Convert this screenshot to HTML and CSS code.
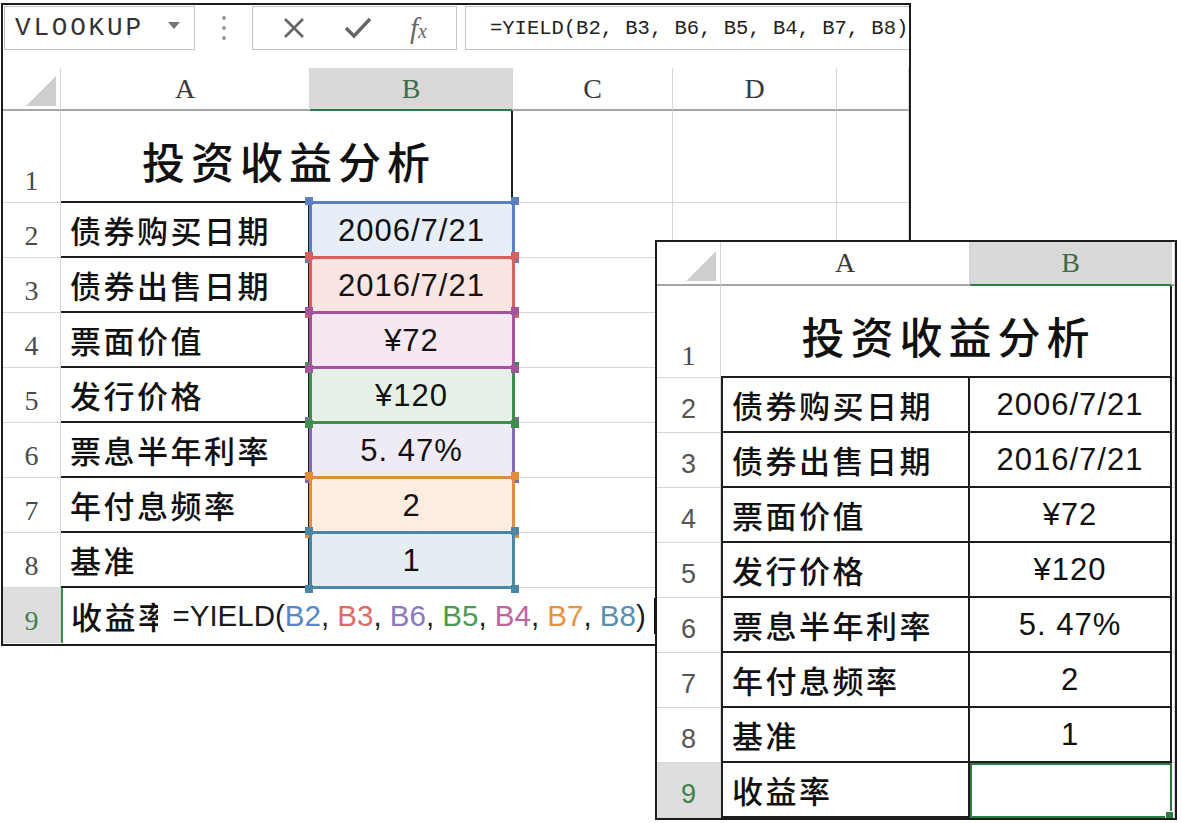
FILE: index.html
```html
<!DOCTYPE html>
<html lang="zh-CN">
<head>
  <meta charset="UTF-8" />
  <title>投资收益分析 - YIELD</title>
  <link rel="stylesheet" href="styles.css">
</head>
<body>
<div class="desk">

  <div class="win win-left">
    <div class="fbar">
      <div class="namebox">
        <span>VLOOKUP</span>
        <svg class="drop" width="12" height="8" viewBox="0 0 12 8"><polygon points="0,0 12,0 6,7" fill="#777"/></svg>
      </div>
      <div class="dots">
        <svg width="6" height="26" viewBox="0 0 6 26"><circle cx="3" cy="3" r="2" fill="#9a9a9a"/><circle cx="3" cy="13" r="2" fill="#9a9a9a"/><circle cx="3" cy="23" r="2" fill="#9a9a9a"/></svg>
      </div>
      <div class="fbtns">
        <svg width="24" height="24" viewBox="0 0 24 24"><path d="M3 3 L21 21 M21 3 L3 21" stroke="#666" stroke-width="2.6" fill="none"/></svg>
        <svg width="28" height="24" viewBox="0 0 28 24"><path d="M2 12 L10 20 L26 3" stroke="#666" stroke-width="3.4" fill="none"/></svg>
        <span class="fx">f<small>x</small></span>
      </div>
      <div class="finput">=YIELD(B2, B3, B6, B5, B4, B7, B8)</div>
    </div>

    <div class="grid grid-left">
      <div class="corner"><svg width="30" height="30" viewBox="0 0 30 30"><polygon points="30,0 30,30 0,30" fill="#cfcfcf"/></svg></div>
      <div class="colhead">A</div>
      <div class="colhead sel">B</div>
      <div class="colhead">C</div>
      <div class="colhead">D</div>
      <div class="colhead"></div>

      <div class="rowhead">1</div>
      <div class="title">投资收益分析</div>
      <div></div><div></div><div></div>

      <div class="rowhead">2</div>
      <div class="lab">债券购买日期</div>
      <div class="val ref b2">2006/7/21</div>
      <div></div><div></div><div></div>

      <div class="rowhead">3</div>
      <div class="lab">债券出售日期</div>
      <div class="val ref b3">2016/7/21</div>
      <div></div><div></div><div></div>

      <div class="rowhead">4</div>
      <div class="lab">票面价值</div>
      <div class="val ref b4">¥72</div>
      <div></div><div></div><div></div>

      <div class="rowhead">5</div>
      <div class="lab">发行价格</div>
      <div class="val ref b5">¥120</div>
      <div></div><div></div><div></div>

      <div class="rowhead">6</div>
      <div class="lab">票息半年利率</div>
      <div class="val ref b6">5. 47%</div>
      <div></div><div></div><div></div>

      <div class="rowhead">7</div>
      <div class="lab">年付息频率</div>
      <div class="val ref b7">2</div>
      <div></div><div></div><div></div>

      <div class="rowhead">8</div>
      <div class="lab">基准</div>
      <div class="val ref b8">1</div>
      <div></div><div></div><div></div>

      <div class="rowhead active">9</div>
      <div class="edit">
        <span class="under">收益率</span>
        <span class="fml">=YIELD(<span class="c2">B2</span>, <span class="c3">B3</span>, <span class="c6">B6</span>, <span class="c5">B5</span>, <span class="c4">B4</span>, <span class="c7">B7</span>, <span class="c8">B8</span>)</span>
        <span class="cursor"></span>
      </div>
    </div>
  </div>

  <div class="win win-right">
    <div class="grid grid-right">
      <div class="corner"><svg width="30" height="30" viewBox="0 0 30 30"><polygon points="30,0 30,30 0,30" fill="#cfcfcf"/></svg></div>
      <div class="colhead">A</div>
      <div class="colhead sel">B</div>
      <div class="colhead"></div>

      <div class="rowhead">1</div>
      <div class="title">投资收益分析</div>
      <div></div>

      <div class="rowhead sans">2</div>
      <div class="lab">债券购买日期</div>
      <div class="val">2006/7/21</div>
      <div></div>

      <div class="rowhead sans">3</div>
      <div class="lab">债券出售日期</div>
      <div class="val">2016/7/21</div>
      <div></div>

      <div class="rowhead sans">4</div>
      <div class="lab">票面价值</div>
      <div class="val">¥72</div>
      <div></div>

      <div class="rowhead sans">5</div>
      <div class="lab">发行价格</div>
      <div class="val">¥120</div>
      <div></div>

      <div class="rowhead sans">6</div>
      <div class="lab">票息半年利率</div>
      <div class="val">5. 47%</div>
      <div></div>

      <div class="rowhead sans">7</div>
      <div class="lab">年付息频率</div>
      <div class="val">2</div>
      <div></div>

      <div class="rowhead sans">8</div>
      <div class="lab">基准</div>
      <div class="val">1</div>
      <div></div>

      <div class="rowhead sans active">9</div>
      <div class="lab">收益率</div>
      <div class="val current"></div>
      <div></div>
    </div>
  </div>

</div>
</body>
</html>
```

FILE: styles.css
```css
* { box-sizing: border-box; }

body {
  margin: 0;
  background: #fff;
  color: #111;
  font-family: "Noto Sans CJK SC", "Noto Sans", sans-serif;
}

.desk {
  position: relative;
  width: 1181px;
  height: 823px;
  overflow: hidden;
}

.win {
  border: 2px solid #1c1c1c;
  background: #fff;
  overflow: hidden;
}

.win-left {
  width: 910px;
  height: 643px;
  margin: 3px 0 0 1px;
}

.win-right {
  position: absolute;
  left: 655px;
  top: 240px;
  width: 522px;
  height: 580px;
  z-index: 10;
}

/* formula bar */
.fbar {
  display: flex;
  align-items: stretch;
  height: 45px;
  margin-bottom: 18px;
  padding-top: 1px;
}

.namebox {
  width: 191px;
  margin-left: 1px;
  border: 1px solid #c4c4c4;
  display: flex;
  align-items: center;
  justify-content: space-between;
  padding: 0 14px 0 10px;
  font-family: "Liberation Mono", monospace;
  font-size: 26px;
  letter-spacing: 2.8px;
  color: #333;
}

.namebox .drop { margin-bottom: 4px; }

.dots {
  width: 57px;
  display: flex;
  align-items: center;
  justify-content: center;
}

.fbtns {
  width: 205px;
  border: 1px solid #c4c4c4;
  display: flex;
  align-items: center;
  justify-content: space-around;
  padding: 0 10px;
}

.fx {
  font-family: "Liberation Serif", serif;
  font-style: italic;
  font-size: 29px;
  color: #666;
}

.fx small { font-size: 20px; }

.finput {
  flex: 1;
  margin-left: 8px;
  border: 1px solid #c4c4c4;
  border-right: none;
  display: flex;
  align-items: center;
  padding-left: 24px;
  font-family: "Liberation Mono", monospace;
  font-size: 20.5px;
  white-space: nowrap;
  color: #222;
}

/* grids */
.grid { display: grid; }

.grid-left {
  grid-template-columns: 58px 249px 203px 160px 164px 1fr;
  grid-template-rows: 43px 92px repeat(8, 55px);
}

.grid-right {
  grid-template-columns: 64px 249px 202px 1fr;
  grid-template-rows: 44px 92px repeat(8, 55px);
}

.grid > div {
  display: flex;
  align-items: center;
  border-right: 1px solid #d6d6d6;
  border-bottom: 1px solid #d6d6d6;
}

.grid > .corner {
  align-items: flex-end;
  justify-content: flex-end;
  padding: 0 4px 3px 0;
  border-bottom: 2px solid #a6a6a6;
}

.grid > .colhead {
  justify-content: center;
  font-family: "Liberation Serif", serif;
  font-size: 28px;
  color: #3a3a3a;
  border-bottom: 2px solid #a6a6a6;
}

.grid > .colhead.sel {
  background: #d9d9d9;
  color: #3f6c48;
  border-bottom: 2px solid #2f7b45;
}

.grid > .rowhead {
  justify-content: center;
  align-items: flex-end;
  padding-bottom: 5px;
  font-family: "Liberation Serif", serif;
  font-size: 28px;
  color: #4a4a4a;
}

.grid > .rowhead.sans {
  font-family: "Liberation Sans", sans-serif;
  font-size: 27px;
  color: #555;
  padding-bottom: 7px;
}

.grid > .rowhead.active {
  background: #dedede;
  color: #3f7f50;
}

.grid > .title {
  grid-column: span 2;
  justify-content: center;
  padding: 8px 0 0 6px;
  font-size: 43px;
  font-weight: 500;
  letter-spacing: 6px;
  border-right: 2px solid #1e1e1e;
  border-bottom: 2px solid #1e1e1e;
}

.grid > .lab {
  padding-left: 9px;
  font-size: 31px;
  font-weight: 500;
  letter-spacing: 2.5px;
  border-right: 2px solid #1e1e1e;
  border-bottom: 2px solid #1e1e1e;
}

.grid-right > .lab { box-shadow: inset 2px 0 0 #1e1e1e; padding-left: 11px; }

.grid > .val {
  justify-content: center;
  font-family: "Liberation Sans", sans-serif;
  font-size: 31px;
  letter-spacing: 1px;
  border-right: 2px solid #1e1e1e;
  border-bottom: 2px solid #1e1e1e;
}

.grid > .val.current {
  position: relative;
  border: 2px solid #2f7b45;
}

.val.current::after {
  content: "";
  position: absolute;
  right: -4px;
  bottom: -4px;
  width: 7px;
  height: 7px;
  background: #2f7b45;
  border: 1px solid #fff;
}

/* coloured reference boxes */
.grid > .ref {
  position: relative;
  background: var(--fill);
  border: none;
}

.ref::before {
  content: "";
  position: absolute;
  top: -2px;
  left: -1px;
  right: -2px;
  bottom: -1px;
  border: 3px solid var(--c);
}

.ref::after {
  content: "";
  position: absolute;
  top: -6px;
  left: -5px;
  right: -6px;
  bottom: -5px;
  background:
    linear-gradient(var(--c), var(--c)) left top / 8px 8px no-repeat,
    linear-gradient(var(--c), var(--c)) right top / 8px 8px no-repeat,
    linear-gradient(var(--c), var(--c)) left bottom / 8px 8px no-repeat,
    linear-gradient(var(--c), var(--c)) right bottom / 8px 8px no-repeat;
}

.b2 { --c: #5b80c2; --fill: #e8eef8; z-index: 1; }
.b3 { --c: #d9605e; --fill: #fbe5e3; z-index: 2; }
.b4 { --c: #a2549c; --fill: #f6e8f3; z-index: 5; }
.b5 { --c: #3f8e4d; --fill: #e5f1e6; z-index: 4; }
.b6 { --c: #7e6db2; --fill: #eeeaf6; z-index: 3; }
.b7 { --c: #e38c3e; --fill: #fcede0; z-index: 4; }
.b8 { --c: #4c86a5; --fill: #e4edf2; z-index: 5; }

/* cell being edited: the typed formula sits over the label */
.grid > .edit {
  grid-column: span 5;
  border: none;
  border-left: 2px solid #3b8a50;
  padding-left: 8px;
  white-space: nowrap;
}

.edit .under {
  font-size: 31px;
  font-weight: 500;
  letter-spacing: 2.5px;
}

.edit .fml {
  position: relative;
  margin-left: -14px;
  padding-left: 15px;
  background: #fff;
  font-family: "Liberation Sans", sans-serif;
  font-size: 29.5px;
  color: #1a1a1a;
}

.edit .cursor {
  width: 2px;
  height: 36px;
  margin-left: 8px;
  background: #111;
}

.c2 { color: #5b87c6; }
.c3 { color: #e06a66; }
.c6 { color: #8a78c0; }
.c5 { color: #4a9a55; }
.c4 { color: #c0649f; }
.c7 { color: #e8923e; }
.c8 { color: #5a8fb0; }
```
